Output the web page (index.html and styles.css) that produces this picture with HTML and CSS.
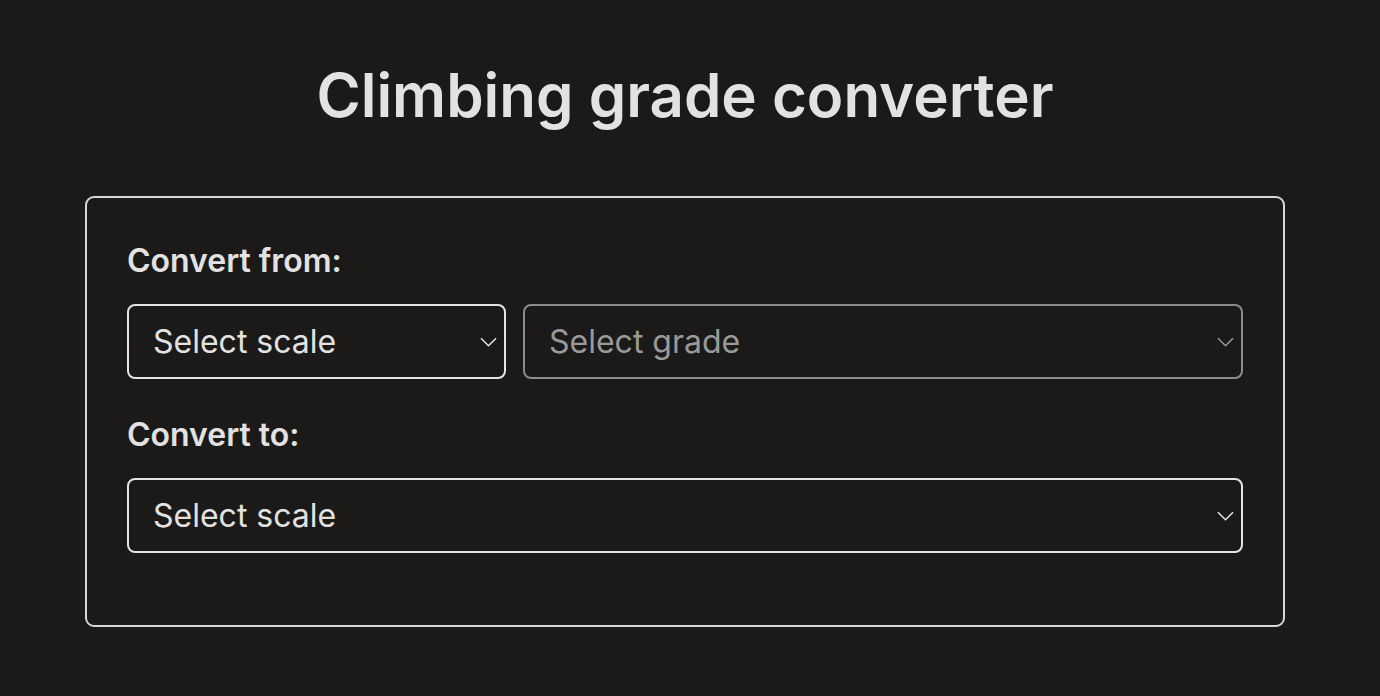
FILE: index.html
```html
<!DOCTYPE html>
<html lang="en">
<head>
    <meta charset="UTF-8">
    <meta name="viewport" content="width=device-width, initial-scale=1.0">
    <title>Climbing grade converter</title>
    <link rel="stylesheet" href="styles.css">
</head>
<body>
    <main class="page">
        <h1 class="title">Climbing grade converter</h1>

        <form class="converter">
            <label class="field-label" for="from-scale">Convert from:</label>
            <div class="row">
                <div class="select-wrap scale">
                    <select id="from-scale">
                        <option>Select scale</option>
                    </select>
                    <svg class="chevron" viewBox="0 0 18 10"><path d="M1 1l8 8 8-8"/></svg>
                </div>
                <div class="select-wrap grade">
                    <select id="from-grade" disabled>
                        <option>Select grade</option>
                    </select>
                    <svg class="chevron" viewBox="0 0 18 10"><path d="M1 1l8 8 8-8"/></svg>
                </div>
            </div>

            <label class="field-label" for="to-scale">Convert to:</label>
            <div class="row">
                <div class="select-wrap full">
                    <select id="to-scale">
                        <option>Select scale</option>
                    </select>
                    <svg class="chevron" viewBox="0 0 18 10"><path d="M1 1l8 8 8-8"/></svg>
                </div>
            </div>
        </form>
    </main>
</body>
</html>
```

FILE: styles.css
```css
body {
    margin: 0;
    padding: 0 10px 0 0;
    background-color: #1b1a19;
    color: #e2e2e2;
    font-family: Inter, "Noto Sans", sans-serif;
}

.page {
    width: 1200px;
    margin: 0 auto;
}

.title {
    margin: 59px 0 65px;
    font-size: 60px;
    line-height: 72px;
    font-weight: 600;
    text-align: center;
    color: #e2e2e2;
}

.converter {
    border: 2px solid #d6d6d6;
    border-radius: 9px;
    padding: 43px 40px 72px;
}

.field-label {
    display: block;
    font-size: 32px;
    line-height: 40px;
    font-weight: 600;
    margin-bottom: 23px;
}

.row {
    display: flex;
    gap: 17px;
}

.row + .field-label {
    margin-top: 36px;
}

.select-wrap {
    position: relative;
}

.select-wrap.scale {
    width: 379px;
}

.select-wrap.grade,
.select-wrap.full {
    flex: 1;
}

select {
    appearance: none;
    -webkit-appearance: none;
    width: 100%;
    height: 75px;
    padding: 0 40px 0 24px;
    background-color: #1b1a19;
    color: #e2e2e2;
    border: 2px solid #e4e4e4;
    border-radius: 8px;
    font-family: Inter, "Noto Sans", sans-serif;
    font-size: 32px;
    outline: none;
}

select:disabled {
    color: #999999;
    border-color: #8c8c8c;
    opacity: 1;
}

.chevron {
    position: absolute;
    right: 9px;
    top: 33px;
    width: 17px;
    height: 10px;
    fill: none;
    stroke: #e4e4e4;
    stroke-width: 1.6;
    pointer-events: none;
}

.grade .chevron {
    stroke: #9a9a9a;
}
```
